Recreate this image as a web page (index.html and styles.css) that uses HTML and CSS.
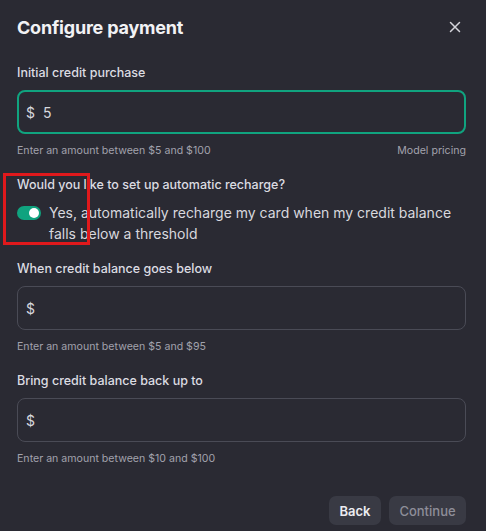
FILE: index.html
```html
<!DOCTYPE html>
<html lang="en">
<head>
<meta charset="utf-8">
<link rel="stylesheet" href="styles.css">
</head>
<body>
<div class="modal">
  <div class="header">
    <h1 class="title">Configure payment</h1>
    <button class="close" aria-label="Close">
      <svg width="12" height="12" viewBox="0 0 12 12"><path d="M1.5 1.5 L10.5 10.5 M10.5 1.5 L1.5 10.5" stroke="#d4d4da" stroke-width="1.5" stroke-linecap="round"/></svg>
    </button>
  </div>

  <div class="field first">
    <label class="label">Initial credit purchase</label>
    <div class="input focused"><span class="cur">$</span><span class="val">5</span></div>
    <div class="help"><span>Enter an amount between $5 and $100</span><span>Model pricing</span></div>
  </div>

  <div class="field recharge">
    <div class="label">Would you like to set up automatic recharge?</div>
    <div class="toggle-row">
      <span class="toggle"><span class="knob"></span></span>
      <span class="toggle-text">Yes, automatically recharge my card when my credit balance falls below a threshold</span>
    </div>
    <div class="annot"></div>
  </div>

  <div class="field below">
    <label class="label">When credit balance goes below</label>
    <div class="input"><span class="cur">$</span></div>
    <div class="help"><span>Enter an amount between $5 and $95</span></div>
  </div>

  <div class="field upto">
    <label class="label">Bring credit balance back up to</label>
    <div class="input"><span class="cur">$</span></div>
    <div class="help"><span>Enter an amount between $10 and $100</span></div>
  </div>

  <div class="actions">
    <button class="btn back">Back</button>
    <button class="btn cont">Continue</button>
  </div>
</div>
</body>
</html>
```

FILE: styles.css
```css
* { box-sizing: border-box; }
html, body { margin: 0; padding: 0; }
body {
  background: #2a2a33;
  font-family: Inter, "Liberation Sans", sans-serif;
  color: #ececf1;
  width: 486px;
  height: 531px;
  overflow: hidden;
}
.modal {
  padding: 12px 20px 0 17px;
  display: flex;
  flex-direction: column;
}
.header {
  display: flex;
  justify-content: space-between;
  align-items: center;
  height: 30px;
}
.title {
  margin: 0;
  font-size: 18px;
  font-weight: 700;
  letter-spacing: -0.2px;
  color: #f2f2f5;
}
.close {
  background: none;
  border: 0;
  padding: 0;
  margin-right: 5px;
  display: flex;
}
.field { display: flex; flex-direction: column; }
.label {
  font-size: 12.5px;
  font-weight: 500;
  color: #dcdce2;
  line-height: 16px;
}
.first { margin-top: 23px; }
.input {
  margin-top: 9px;
  height: 44px;
  border: 1px solid #4a4b56;
  border-radius: 8px;
  display: flex;
  align-items: center;
  padding-left: 8px;
  gap: 8px;
  font-size: 14px;
  color: #d8d8de;
}
.input.focused {
  border: 2px solid #10a37f;
  padding-left: 7px;
}
.help {
  margin-top: 10px;
  display: flex;
  justify-content: space-between;
  font-size: 10.6px;
  color: #a2a2ad;
  line-height: 14px;
}
.recharge { margin-top: 19px; position: relative; }
.toggle-row {
  margin-top: 9px;
  display: flex;
  align-items: flex-start;
  gap: 8px;
}
.toggle {
  flex: none;
  width: 24px;
  height: 14px;
  margin-top: 4px;
  border-radius: 7px;
  background: #10a37f;
  position: relative;
}
.knob {
  position: absolute;
  right: 2px;
  top: 2px;
  width: 10px;
  height: 10px;
  border-radius: 50%;
  background: #ffffff;
}
.toggle-text {
  font-size: 14px;
  line-height: 21px;
  color: #d8d8de;
}
.annot {
  position: absolute;
  left: -14px;
  top: -4px;
  width: 87px;
  height: 72px;
  border: 3px solid #e0191c;
}
.below { margin-top: 17px; }
.upto { margin-top: 19px; }
.actions {
  margin-top: 30px;
  display: flex;
  justify-content: flex-end;
  gap: 8px;
}
.btn {
  border: 0;
  border-radius: 7px;
  background: #393a44;
  height: 29px;
  font-family: inherit;
  font-size: 13px;
  font-weight: 600;
  padding: 0;
}
.back { color: #ececf1; width: 52px; }
.cont { color: #8e8e99; width: 77px; font-weight: 500; }
```
